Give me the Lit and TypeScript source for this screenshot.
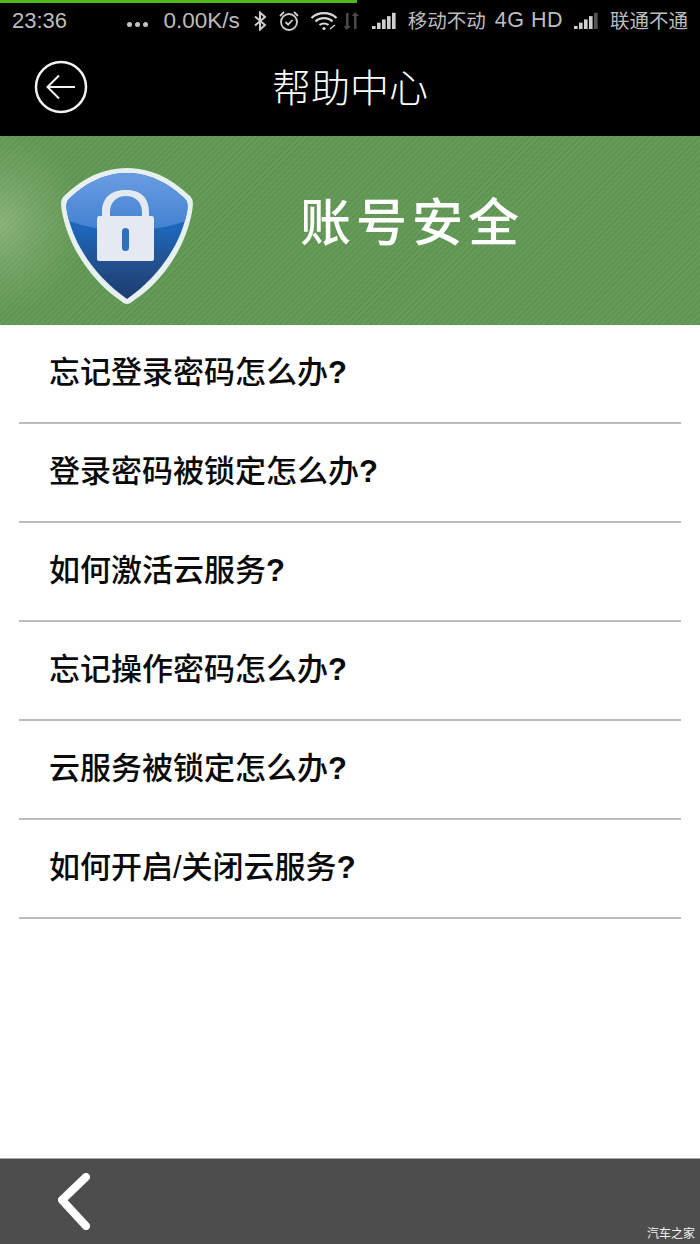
import { LitElement, html, css, svg } from "lit";
import { customElement } from "lit/decorators.js";

const QUESTIONS = [
  "忘记登录密码怎么办",
  "登录密码被锁定怎么办",
  "如何激活云服务",
  "忘记操作密码怎么办",
  "云服务被锁定怎么办",
  "如何开启/关闭云服务",
];

const bars = (lit: number) =>
  html`<svg class="sig" width="26" height="18" viewBox="0 0 26 18">
    ${[0, 1, 2, 3, 4].map((i) => {
      const h = 3 + i * 3.3;
      return svg`<rect x=${i * 5 + 1} y=${17 - h} width="3.6" height=${h} fill=${i < lit ? "#d0d0d0" : "#555"}></rect>`;
    })}
  </svg>`;

@customElement("app-root")
export class AppRoot extends LitElement {
  static styles = css`
    :host {
      display: flex;
      flex-direction: column;
      position: relative;
      width: 700px;
      height: 1244px;
      overflow: hidden;
      background: #fff;
      font-family: "Liberation Sans", "Noto Sans CJK SC", sans-serif;
    }
    .progress {
      position: absolute;
      left: 0;
      top: 0;
      width: 357px;
      height: 3px;
      background: #50b818;
    }
    .top {
      background: #000;
      height: 136px;
      flex: none;
      display: flex;
      flex-direction: column;
    }
    .status {
      height: 41px;
      display: flex;
      align-items: center;
      padding: 0 12px;
      color: #bdbdbd;
      font-size: 22px;
      white-space: nowrap;
    }
    .time { width: 116px; }
    .dots {
      width: 37px;
      display: flex;
      gap: 3px;
      align-items: center;
      padding-top: 7px;
      box-sizing: border-box;
    }
    .dots i { width: 5px; height: 5px; border-radius: 50%; background: #c4c4c4; }
    .speed { width: 89px; font-size: 22.500px; }
    .st-ic { flex: none; display: block; }
    .bt, .alarm { margin-right: 10px; }
    .wifi { margin-right: 5px; }
    .data { margin-right: 10px; }
    .sig { flex: none; display: block; }
    .carrier { font-size: 19.5px; margin-left: 11px; padding-bottom: 2px; }
    .net { margin-left: 9px; width: 79px; font-size: 21.500px; letter-spacing: 0.5px; }
    .nav {
      flex: 1;
      position: relative;
      display: flex;
      align-items: center;
      justify-content: center;
      color: #fff;
      font-size: 39px;
      padding-bottom: 7px;
      font-family: "Noto Sans CJK SC", sans-serif;
      font-weight: 300;
    }
    .back {
      position: absolute;
      left: 34px;
      top: 19px;
      display: block;
    }
    .banner {
      flex: none;
      height: 189px;
      display: flex;
      align-items: center;
      background:
        radial-gradient(ellipse 85px 90px at 0 88px, rgba(190, 215, 170, 0.42), rgba(190, 215, 170, 0.18) 50%, rgba(190, 215, 170, 0) 100%),
        repeating-linear-gradient(135deg, rgba(255, 255, 255, 0.03) 0 2px, rgba(0, 0, 0, 0.025) 2px 4px),
        #619854;
      box-sizing: border-box;
      padding-left: 56px;
    }
    .shield { flex: none; display: block; }
    .banner-title {
      margin-left: 104px;
      color: #fff;
      font-family: "Noto Sans CJK SC", sans-serif;
      font-weight: 500;
      font-size: 51px;
      letter-spacing: 5px;
      line-height: 1;
      padding-bottom: 22px;
    }
    .list {
      flex: 1;
      padding: 0 19px;
      display: flex;
      flex-direction: column;
    }
    .row {
      height: 88px;
      border-bottom: 2px solid #bcbcbc;
      display: flex;
      align-items: center;
      padding: 0 0 9px 30px;
      font-size: 31px;
      font-weight: 500;
      color: #0a0a0a;
      white-space: pre;
    }
    .row b { font-weight: 700; }
    .bottom {
      flex: none;
      height: 86px;
      background: #4d4d4d;
      border-top: 1px solid #a8a8a8;
      position: relative;
      box-sizing: border-box;
    }
    .chev { position: absolute; left: 50px; top: 8px; display: block; filter: blur(0.6px); }
    .mark {
      position: absolute;
      right: 5px;
      bottom: 4px;
      color: #f2f2f2;
      font-size: 12px;
      font-family: "Noto Sans CJK SC", sans-serif;
      line-height: 14px;
    }
  `;

  render() {
    return html`
      <div class="top">
        <div class="status">
          <span class="time">23:36</span>
          <span class="dots"><i></i><i></i><i></i></span>
          <span class="speed">0.00K/s</span>
          <svg class="st-ic bt" width="16" height="20" viewBox="0 0 16 20" fill="none" stroke="#cfcfcf" stroke-width="2">
            <path d="M3 5.500 13 14 8 18.500V1.500L13 6 3 14.500" />
          </svg>
          <svg class="st-ic alarm" width="22" height="22" viewBox="0 0 22 22" fill="none" stroke="#cfcfcf" stroke-width="1.800">
            <circle cx="11" cy="12" r="8" />
            <path d="M7.500 12l2.600 2.600 4.400-4.600M2 6l4-4M20 6l-4-4" />
          </svg>
          <svg class="st-ic wifi" width="28" height="20" viewBox="0 0 28 20" fill="none" stroke="#d8d8d8" stroke-width="2.200">
            <path d="M1.500 7C8 .5 20 .5 26.500 7M5.500 10.500C10 6 18 6 22.500 10.500M9.500 14C12 12 16 12 18.500 14" />
            <circle cx="14" cy="17.500" r="1.600" fill="#d8d8d8" stroke="none" />
            <path d="M20 18l5-4" stroke-width="1.500" />
          </svg>
          <svg class="st-ic data" width="18" height="20" viewBox="0 0 18 20" fill="#4a4a4a">
            <path d="M3 2h2.500v13H8L3.500 19 1 15h2zM11 18h2.500V5H16L12 1 9 5h2z" />
          </svg>
          ${bars(5)}
          <span class="carrier">移动不动</span>
          <span class="net">4G HD</span>
          ${bars(4)}
          <span class="carrier">联通不通</span>
        </div>
        <div class="nav">
          <svg class="back" width="54" height="54" viewBox="0 0 54 54" fill="none" stroke="#f2f2f2">
            <circle cx="27" cy="27" r="25" stroke-width="2.500" />
            <path d="M41 27H14M25 15.500 13.500 27 25 38.500" stroke-width="2" />
          </svg>
          帮助中心
        </div>
      </div>
      <div class="banner">
        <svg class="shield" width="140" height="149" viewBox="56 156 140 149">
          <defs>
            <linearGradient id="base" x1="0" y1="173" x2="0" y2="299" gradientUnits="userSpaceOnUse">
              <stop offset="0" stop-color="#1b66bb" />
              <stop offset="0.45" stop-color="#1d66ba" />
              <stop offset="0.72" stop-color="#22508f" />
              <stop offset="1" stop-color="#1c3d70" />
            </linearGradient>
            <linearGradient id="gloss" x1="0" y1="173" x2="0" y2="233" gradientUnits="userSpaceOnUse">
              <stop offset="0" stop-color="#6a9de0" />
              <stop offset="1" stop-color="#3f80d2" />
            </linearGradient>
            <clipPath id="inner">
              <path d="M127 173C152 173 172 186 185 199C188 202 188 206 187 212C181 243 160 276 127 299C94 276 73 243 67 212C66 206 66 202 69 199C82 186 102 173 127 173Z" />
            </clipPath>
          </defs>
          <path d="M127 168C155 168 175 182 190 196C194 200 193 205 192 212C186 245 165 280 133 301C129 305 125 305 121 301C90 280 68 245 62 212C61 205 60 200 64 196C79 182 99 168 127 168Z" fill="#e6f1ef" />
          <g clip-path="url(#inner)">
            <rect x="60" y="168" width="135" height="135" fill="url(#base)" />
            <path d="M60 165H195V218Q127 244 60 218Z" fill="url(#gloss)" />
          </g>
          <path fill-rule="evenodd" d="M102 216V212C102 197 112 190 126 190C140 190 149 197 149 212V216H152C153 216 154 217 154 219V259C154 260 153 261 152 261H99C98 261 97 260 97 259V219C97 217 98 216 99 216ZM110 216H142V212C142 202 135 196 126 196C117 196 110 202 110 212Z" fill="#e4e9f2" />
          <rect x="122" y="228" width="7" height="23" rx="3.500" fill="#2f6fc0" />
        </svg>
        <div class="banner-title">账号安全</div>
      </div>
      <div class="list">
        ${QUESTIONS.map((q) => html`<div class="row"><span>${q}<b>?</b></span></div>`)}
      </div>
      <div class="bottom">
        <svg class="chev" width="46" height="66" viewBox="0 0 46 66" fill="none" stroke="#fff" stroke-width="8" stroke-linecap="round" stroke-linejoin="round">
          <path d="M36 10 12 33 36 59" />
        </svg>
        <div class="mark">汽车之家</div>
      </div>
      <div class="progress"></div>
    `;
  }
}
